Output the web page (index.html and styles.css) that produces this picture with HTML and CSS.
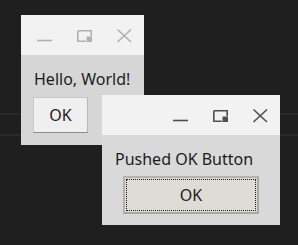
FILE: index.html
```html
<!DOCTYPE html>
<html>
<head>
<meta charset="utf-8">
<link rel="stylesheet" href="styles.css">
</head>
<body>
<div class="desktop">
  <div class="window win-hello inactive">
    <div class="titlebar">
      <span class="tb-btn"><svg width="40" height="40" viewBox="0 0 40 40"><path d="M13 25.5h15" /></svg></span>
      <span class="tb-btn"><svg width="40" height="40" viewBox="0 0 40 40"><path d="M13.8 15.8h13.4v5.2M13.8 15.8v10.4h8" /><rect x="22.5" y="21.5" width="5.5" height="5.5" class="fill"/></svg></span>
      <span class="tb-btn"><svg width="40" height="40" viewBox="0 0 40 40"><path d="M13.5 14.5l13.5 12.5M27 14.5l-13.5 12.5" /></svg></span>
    </div>
    <div class="content">
      <div class="label">Hello, World!</div>
      <button class="btn btn-plain">OK</button>
    </div>
  </div>
  <div class="window win-pushed">
    <div class="titlebar">
      <span class="tb-btn"><svg width="40" height="40" viewBox="0 0 40 40"><path d="M13 25.5h15" /></svg></span>
      <span class="tb-btn"><svg width="40" height="40" viewBox="0 0 40 40"><path d="M13.8 15.8h13.4v5.2M13.8 15.8v10.4h8" /><rect x="22.5" y="21.5" width="5.5" height="5.5" class="fill"/></svg></span>
      <span class="tb-btn"><svg width="40" height="40" viewBox="0 0 40 40"><path d="M13.5 14.5l13.5 12.5M27 14.5l-13.5 12.5" /></svg></span>
    </div>
    <div class="content">
      <div class="label">Pushed OK Button</div>
      <button class="btn btn-focus">OK</button>
    </div>
  </div>
</div>
</body>
</html>
```
FILE: styles.css
```css
html, body {
  margin: 0;
  padding: 0;
}
body {
  width: 298px;
  height: 245px;
  overflow: hidden;
  background-color: #1f1f1f;
  background-image:
    linear-gradient(#2a2a2a, #2a2a2a),
    linear-gradient(#2a2a2a, #2a2a2a);
  background-size: 100% 2px, 100% 2px;
  background-position: 0 113px, 0 134px;
  background-repeat: no-repeat;
  font-family: "Noto Sans", "Open Sans", sans-serif;
  color: #1c1c1c;
}
.desktop {
  position: relative;
  width: 298px;
  height: 245px;
}
.window {
  position: absolute;
  display: flex;
  flex-direction: column;
  background: #d9d9d9;
}
.win-hello {
  left: 21px;
  top: 15px;
  width: 123px;
  height: 130px;
  background: #d6d6d6;
}
.win-pushed {
  left: 102px;
  top: 95px;
  width: 178px;
  height: 130px;
}
.titlebar {
  height: 40px;
  background: #f2f2f2;
  display: flex;
  justify-content: flex-end;
}
.tb-btn {
  width: 40px;
  height: 40px;
  display: block;
}
.tb-btn svg {
  display: block;
}
.tb-btn path {
  fill: none;
  stroke: #4f4f4f;
  stroke-width: 1.6;
}
.tb-btn .fill {
  fill: #4f4f4f;
}
.inactive .tb-btn path {
  stroke: #b0b0b0;
}
.inactive .tb-btn .fill {
  fill: #b0b0b0;
}
.content {
  padding: 14px 13px 0 13px;
  display: flex;
  flex-direction: column;
  align-items: flex-start;
}
.label {
  font-size: 16px;
  line-height: 20px;
  white-space: nowrap;
}
.btn {
  font-family: inherit;
  font-size: 16px;
  color: #1c1c1c;
  padding: 0;
  margin: 0;
  position: relative;
}
.btn-plain {
  margin-top: 8px;
  margin-left: -1px;
  width: 55px;
  height: 36px;
  background: #efefef;
  border: 1px solid #c8c8c8;
  border-bottom-color: #8e8e8e;
  border-right-color: #b8b8b8;
}
.btn-focus {
  margin-top: 7px;
  margin-left: 8px;
  width: 136px;
  height: 38px;
  background: #dddcd6;
  border: 2px solid #b3b2ab;
  border-right-color: #a9a8a1;
  border-bottom-color: #a9a8a1;
}
.btn-focus::after {
  content: "";
  position: absolute;
  left: 1px;
  top: 1px;
  right: 1px;
  bottom: 1px;
  border: 1px dotted #1a1a1a;
}
```
